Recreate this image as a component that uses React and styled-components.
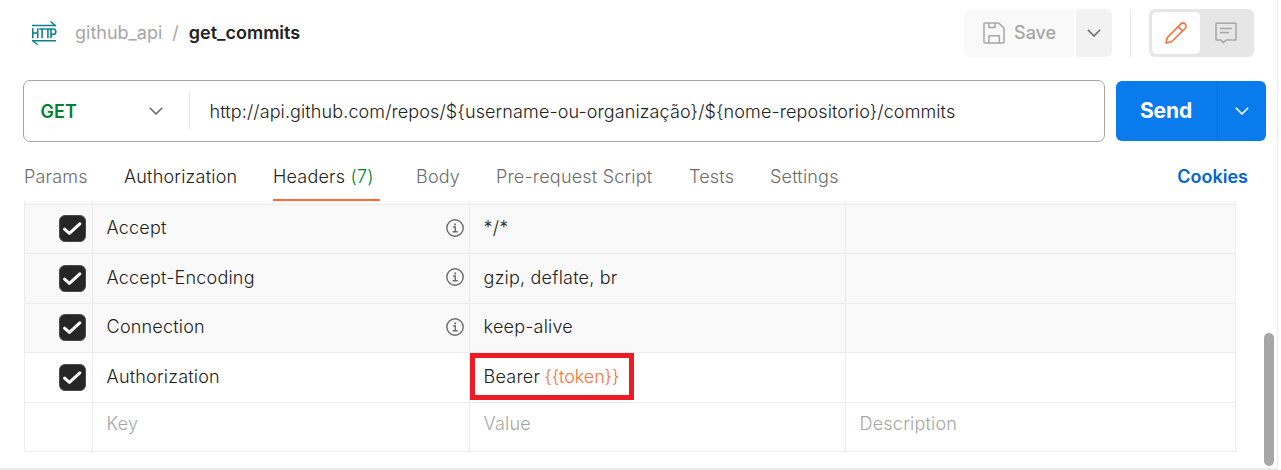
import React from "react";
import styled, { createGlobalStyle } from "styled-components";

const Global = createGlobalStyle`
  * { box-sizing: border-box; }
  body { margin: 0; background: #fff; font-family: Inter, "Liberation Sans", sans-serif; font-size: 18px; font-weight: 360; color: #212121; overflow: hidden; }
  svg { display: block; flex: none; }
`;

const Panel = styled.main`
  width: 1278px;
  height: 470px;
  border-right: 1px solid #ececec;
  border-bottom: 2px solid #ececec;
  display: flex;
  flex-direction: column;
  position: relative;
`;

const TopBar = styled.header`
  height: 80px;
  padding: 9px 23px 0 31px;
  display: flex;
  align-items: flex-start;
`;

const Breadcrumb = styled.div`
  display: flex;
  align-items: center;
  height: 48px;
  flex: 1;
  white-space: pre;
`;

const Crumb = styled.span`
  color: ${(p) => (p.$current ? "#212121" : "#a6a6a6")};
  font-weight: ${(p) => (p.$current ? 600 : 400)};
  margin-left: ${(p) => p.$gap}px;
  padding-bottom: 2px;
`;

const SaveButton = styled.button`
  width: 110px;
  height: 48px;
  border: 0;
  border-radius: 6px 4px 4px 6px;
  background: #f9f9f9;
  color: #a6a6a6;
  font: 500 18px Inter, sans-serif;
  display: flex;
  align-items: center;
  padding: 0 0 1px 19px;
  gap: 9px;
`;

const SaveMenu = styled.button`
  width: 36px;
  height: 48px;
  margin-left: 2px;
  border: 0;
  padding: 0;
  border-radius: 2px 6px 6px 2px;
  background: #f2f2f2;
  display: flex;
  align-items: center;
  justify-content: center;
`;

const Divider = styled.div`
  width: 1px;
  height: ${(p) => p.$height}px;
  margin-left: ${(p) => p.$gap || 0}px;
  background: #e3e3e3;
`;

const Toggle = styled.div`
  width: 105px;
  height: 48px;
  margin-left: 18px;
  padding: 3px;
  border-radius: 6px;
  background: #e6e6e6;
  display: flex;
`;

const ToggleItem = styled.div`
  width: ${(p) => (p.$active ? 48 : 51)}px;
  height: 42px;
  border-radius: 5px;
  background: ${(p) => (p.$active ? "#fff" : "transparent")};
  display: flex;
  align-items: center;
  justify-content: center;
`;

const RequestRow = styled.div`
  height: 62px;
  padding: 0 11px 0 23px;
  display: flex;
  align-items: center;
  gap: 11px;
`;

const UrlBox = styled.div`
  width: 1082px;
  height: 62px;
  border: 1px solid #a6a6a6;
  border-radius: 7px;
  display: flex;
  align-items: center;
`;

const Method = styled.div`
  width: 165px;
  padding: 0 26px 0 16.5px;
  display: flex;
  align-items: center;
  justify-content: space-between;
  color: #007f31;
  font-weight: 600;
`;

const Url = styled.span`
  margin-left: 19.5px;
  letter-spacing: 0.11px;
`;

const SendGroup = styled.div`
  width: 150px;
  height: 60px;
  border-radius: 6px;
  background: #097bed;
  color: #fff;
  display: flex;
`;

const SendLabel = styled.div`
  width: 102px;
  border-right: 1px solid #076cd3;
  display: flex;
  align-items: center;
  justify-content: center;
  padding: 0 1px 1px 0;
  font-size: 21px;
  font-weight: 650;
  letter-spacing: -0.1px;
`;

const SendMenu = styled.div`
  flex: 1;
  display: flex;
  align-items: center;
  justify-content: center;
`;

const Tabs = styled.nav`
  height: 59px;
  padding: 10px 29px 0 24px;
  display: flex;
`;

const Tab = styled.div`
  height: 49px;
  line-height: 50px;
  margin-right: ${(p) => p.$gap}px;
  width: ${(p) => p.$width}px;
  white-space: nowrap;
  letter-spacing: 0.2px;
  color: ${(p) => (p.$strong ? "#212121" : "#6b6b6b")};
  border-bottom: 2px solid ${(p) => (p.$active ? "#ff6c37" : "transparent")};
`;

const Count = styled.span`
  color: #007f31;
`;

const Cookies = styled.div`
  margin-left: auto;
  line-height: 50px;
  font-weight: 600;
  color: #0265d2;
`;

const Table = styled.div`
  width: 1212px;
  margin-left: 24px;
  border: 1px solid #ececec;
  border-top: 0;
  letter-spacing: 0.2px;
`;

const Row = styled.div`
  height: ${(p) => p.$height}px;
  background: ${(p) => (p.$auto ? "#f9f9f9" : "#fff")};
  border-bottom: ${(p) => (p.$last ? 0 : 1)}px solid #ececec;
  display: grid;
  grid-template-columns: 68px 377px 376px 389px;
  color: ${(p) => (p.$placeholder ? "#a6a6a6" : "#212121")};
`;

const Cell = styled.div`
  position: relative;
  border-right: ${(p) => (p.$end ? 0 : 1)}px solid #ececec;
  padding: 0 5px ${(p) => p.$lift || 0}px 13.6px;
  display: flex;
  align-items: center;
  justify-content: space-between;
  white-space: pre;
`;

const CheckCell = styled(Cell)`
  padding: ${(p) => p.$top}px 6px 0 0;
  align-items: flex-start;
  justify-content: flex-end;
`;

const CheckBox = styled.div`
  width: 27px;
  height: 27px;
  border-radius: 6px;
  background: #262626;
  border: 1px solid #4b4b4b;
  display: flex;
  align-items: center;
  justify-content: center;
`;

const Variable = styled.span`
  color: #ff6c37;
  margin-left: -1px;
  letter-spacing: -0.1px;
`;

const Highlight = styled.div`
  position: absolute;
  left: 0;
  top: 0;
  width: 164px;
  height: 47px;
  border: 5px solid #ed1c24;
`;

const ScrollThumb = styled.div`
  position: absolute;
  right: 3px;
  bottom: 2px;
  width: 10px;
  height: 133px;
  border-radius: 5px;
  background: #a6a6a6;
`;

const Chevron = ({ color = "#6b6b6b" }) => (
  <svg width="14" height="8" viewBox="0 0 14 8" fill="none" stroke={color} strokeWidth="1.6">
    <path d="M.8.8 7 7 13.2.8" />
  </svg>
);

const HttpIcon = () => (
  <svg width="26" height="24" viewBox="0 0 26 24" fill="none" stroke="#0d8094" strokeWidth="1.4">
    <path d="M1 4.5H25M19.5.5 24 4.4M25 19.7H1M6.5 23.7 2 19.8" />
    <path strokeWidth="1.6" d="M1.8 7.2V17.2M6.7 7.2V17.2M1.8 12H6.7M8.2 8H14M11.1 8V17.2M14.2 8H19.2M16.9 8V17.2M20 17.2V8H22.3C25.6 8 25.6 13.4 22.3 13.4H20" />
  </svg>
);

const SaveIcon = () => (
  <svg width="22" height="22" viewBox="0 0 22 22" fill="none" stroke="#a6a6a6" strokeWidth="1.5" strokeLinejoin="round">
    <path d="M1.7 1H15.7L21 6.3V20.3a.7.7 0 0 1-.7.7H1.7a.7.7 0 0 1-.7-.7V1.7A.7.7 0 0 1 1.7 1ZM6 1V5.6H12V1M6 21V13.7H16.3V21" />
  </svg>
);

const PencilIcon = () => (
  <svg width="22" height="22" viewBox="0 0 22 22" fill="none" stroke="#ff6c37" strokeWidth="1.6" strokeLinejoin="round">
    <path d="M1 21 2.2 15.7 15.6 2.1C18.7-.9 23.1 3.5 20 6.5L6.6 19.8ZM13.2 4.6 17.5 9" />
  </svg>
);

const CommentIcon = () => (
  <svg width="22" height="22" viewBox="0 0 22 22" fill="none" stroke="#a6a6a6" strokeWidth="1.5" strokeLinejoin="round">
    <path d="M1.6 1.2H20.4a.6.6 0 0 1 .6.6V17.4a.6.6 0 0 1-.6.6H11.2L8.5 20.6 5.8 18H1.6A.6.6 0 0 1 1 17.4V1.8a.6.6 0 0 1 .6-.6ZM5 6.4H17M5 10.6H14" />
  </svg>
);

const Tick = () => (
  <svg width="19" height="15" viewBox="0 0 19 15" fill="none" stroke="#fff" strokeWidth="3" strokeLinecap="round" strokeLinejoin="round">
    <path d="M1.6 8.2 6.4 12.4 16.8 2.8" />
  </svg>
);

const InfoIcon = () => (
  <svg width="18" height="18" viewBox="0 0 18 18" fill="none" stroke="#6b6b6b" strokeWidth="1.4">
    <circle cx="9" cy="9" r="8.2" />
    <path d="M7 8H9.3V12.7M6.6 12.7H11.7" />
    <path strokeWidth="1.8" d="M8.3 5.4H10.1" />
  </svg>
);

const tabs = [
  { label: "Params", width: 63, gap: 37 },
  { label: "Authorization", width: 113, gap: 36, strong: true },
  { label: "Headers", count: "(7)", width: 107, gap: 36, strong: true, active: true },
  { label: "Body", width: 44, gap: 36 },
  { label: "Pre-request Script", width: 157, gap: 36 },
  { label: "Tests", width: 46, gap: 35 },
  { label: "Settings", width: 70, gap: 0 },
];

const headers = [
  { name: "Accept", value: "*/*", auto: true, height: 49, lift: 3, top: 10 },
  { name: "Accept-Encoding", value: "gzip, deflate, br", auto: true, height: 50, lift: 3, top: 11 },
  { name: "Connection", value: "keep-alive", auto: true, height: 49, lift: 3, top: 10 },
  { name: "Authorization", value: "Bearer ", variable: "{{token}}", height: 50, lift: 2, top: 11 },
];

export default function App() {
  return (
    <>
      <Global />
      <Panel>
        <TopBar>
          <Breadcrumb>
            <HttpIcon />
            <Crumb $gap={18}>github_api</Crumb>
            <Crumb $gap={10}>/</Crumb>
            <Crumb $gap={10} $current>get_commits</Crumb>
          </Breadcrumb>
          <SaveButton><SaveIcon />Save</SaveButton>
          <SaveMenu><Chevron /></SaveMenu>
          <Divider $height={48} $gap={18} />
          <Toggle>
            <ToggleItem $active><PencilIcon /></ToggleItem>
            <ToggleItem><CommentIcon /></ToggleItem>
          </Toggle>
        </TopBar>
        <RequestRow>
          <UrlBox>
            <Method>GET<Chevron /></Method>
            <Divider $height={36} />
            <Url>{"http://api.github.com/repos/${username-ou-organização}/${nome-repositorio}/commits"}</Url>
          </UrlBox>
          <SendGroup>
            <SendLabel>Send</SendLabel>
            <SendMenu><Chevron color="#fff" /></SendMenu>
          </SendGroup>
        </RequestRow>
        <Tabs>
          {tabs.map((t) => (
            <Tab key={t.label} $width={t.width} $gap={t.gap} $strong={t.strong} $active={t.active}>
              {t.label}{t.count && <Count> {t.count}</Count>}
            </Tab>
          ))}
          <Cookies>Cookies</Cookies>
        </Tabs>
        <Table>
          <Row $height={4} $auto><Cell /><Cell /><Cell /><Cell $end /></Row>
          {headers.map((h) => (
            <Row key={h.name} $height={h.height} $auto={h.auto}>
              <CheckCell $top={h.top}><CheckBox><Tick /></CheckBox></CheckCell>
              <Cell $lift={h.lift}>{h.name}{h.auto && <InfoIcon />}</Cell>
              <Cell $lift={h.lift}>
                <span>{h.value}{h.variable && <Variable>{h.variable}</Variable>}</span>
                {h.variable && <Highlight />}
              </Cell>
              <Cell $end />
            </Row>
          ))}
          <Row $height={48} $last $placeholder>
            <Cell />
            <Cell $lift={7}>Key</Cell>
            <Cell $lift={7}>Value</Cell>
            <Cell $end $lift={7}>Description</Cell>
          </Row>
        </Table>
        <ScrollThumb />
      </Panel>
    </>
  );
}
